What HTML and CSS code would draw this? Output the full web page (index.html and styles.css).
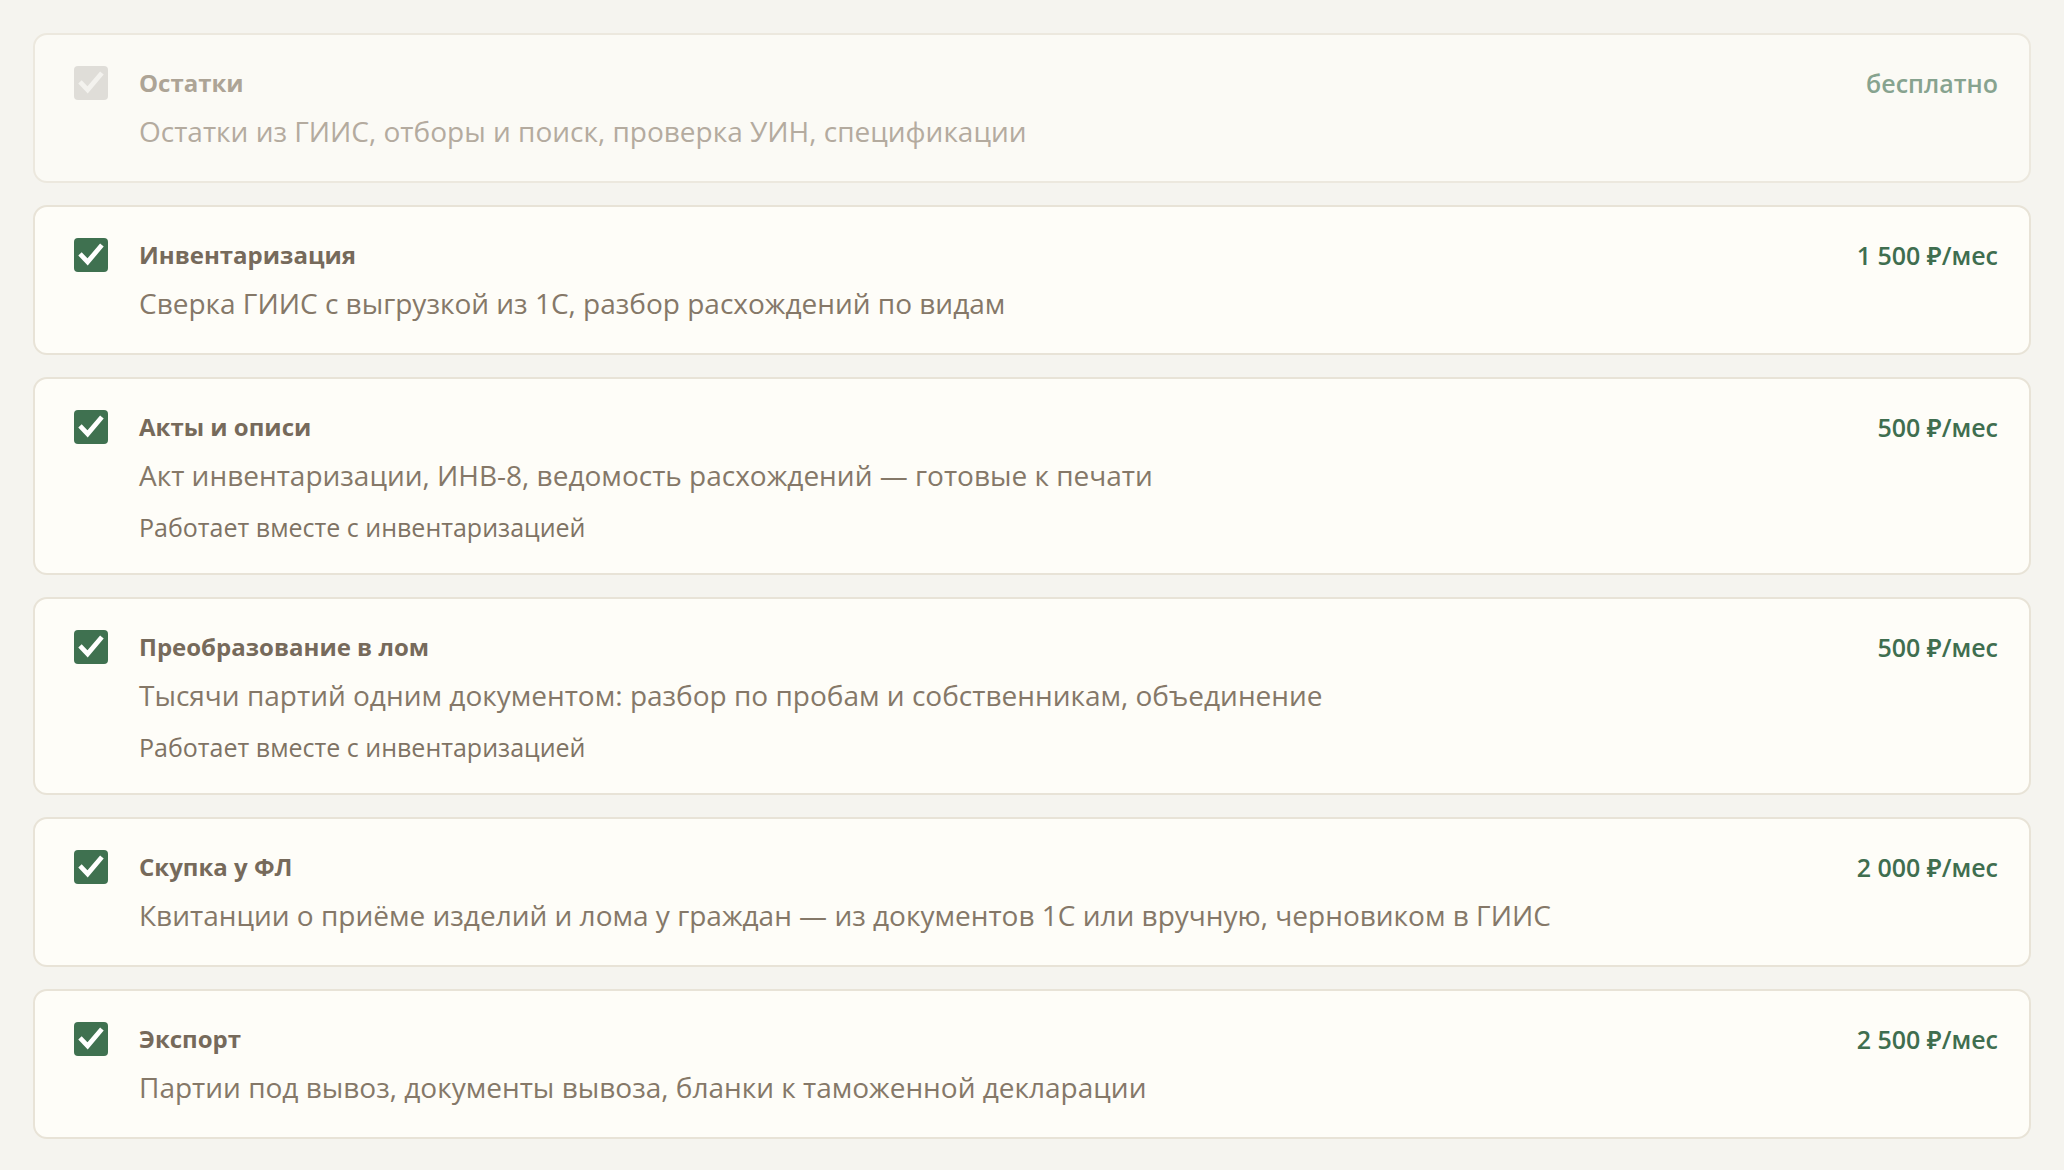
FILE: index.html
```html
<!DOCTYPE html>
<html lang="ru">
<head>
<meta charset="utf-8">
<title>Модули</title>
<link rel="stylesheet" href="styles.css">
</head>
<body>
<div class="list">
  <div class="card card--disabled">
    <span class="check check--off"><svg viewBox="0 0 24 24"><path d="M4.5 12.5l4.8 5L19.5 5.5"/></svg></span>
    <div class="title">Остатки</div>
    <div class="price price--free">бесплатно</div>
    <div class="desc">Остатки из ГИИС, отборы и поиск, проверка УИН, спецификации</div>
  </div>
  <div class="card">
    <span class="check"><svg viewBox="0 0 24 24"><path d="M4.5 12.5l4.8 5L19.5 5.5"/></svg></span>
    <div class="title">Инвентаризация</div>
    <div class="price">1 500 ₽/мес</div>
    <div class="desc">Сверка ГИИС с выгрузкой из 1С, разбор расхождений по видам</div>
  </div>
  <div class="card">
    <span class="check"><svg viewBox="0 0 24 24"><path d="M4.5 12.5l4.8 5L19.5 5.5"/></svg></span>
    <div class="title">Акты и описи</div>
    <div class="price">500 ₽/мес</div>
    <div class="desc">Акт инвентаризации, ИНВ-8, ведомость расхождений — готовые к печати</div>
    <div class="note">Работает вместе с инвентаризацией</div>
  </div>
  <div class="card">
    <span class="check"><svg viewBox="0 0 24 24"><path d="M4.5 12.5l4.8 5L19.5 5.5"/></svg></span>
    <div class="title">Преобразование в лом</div>
    <div class="price">500 ₽/мес</div>
    <div class="desc">Тысячи партий одним документом: разбор по пробам и собственникам, объединение</div>
    <div class="note">Работает вместе с инвентаризацией</div>
  </div>
  <div class="card">
    <span class="check"><svg viewBox="0 0 24 24"><path d="M4.5 12.5l4.8 5L19.5 5.5"/></svg></span>
    <div class="title">Скупка у ФЛ</div>
    <div class="price">2 000 ₽/мес</div>
    <div class="desc">Квитанции о приёме изделий и лома у граждан — из документов 1С или вручную, черновиком в ГИИС</div>
  </div>
  <div class="card">
    <span class="check"><svg viewBox="0 0 24 24"><path d="M4.5 12.5l4.8 5L19.5 5.5"/></svg></span>
    <div class="title">Экспорт</div>
    <div class="price">2 500 ₽/мес</div>
    <div class="desc">Партии под вывоз, документы вывоза, бланки к таможенной декларации</div>
  </div>
</div>
</body>
</html>
```
FILE: styles.css
```css
html, body {
  margin: 0;
  padding: 0;
  background: #f5f4ef;
}
body {
  font-family: "Open Sans", "Noto Sans", sans-serif;
  color: #7d7061;
}
.list {
  display: flex;
  flex-direction: column;
  gap: 22px;
  padding: 33px 33px 31px 33px;
}
.card {
  display: grid;
  grid-template-columns: 34px 1fr auto;
  column-gap: 31px;
  align-items: center;
  background: #fefdf8;
  border: 2px solid #e8e3d7;
  border-radius: 14px;
  padding: 31px 31px 30px 39px;
}
.card--disabled {
  background: #fbfaf5;
  border-color: #ece8de;
}
.check {
  grid-column: 1;
  grid-row: 1;
  width: 34px;
  height: 34px;
  border-radius: 4px;
  background: #3f7150;
  display: flex;
  align-items: center;
  justify-content: center;
}
.check svg {
  width: 30px;
  height: 30px;
  fill: none;
  stroke: #ffffff;
  stroke-width: 3.8;
  stroke-linecap: square;
  stroke-linejoin: miter;
}
.check--off {
  background: #dfddd8;
}
.check--off svg {
  stroke: #f3f2ee;
}
.title {
  grid-column: 2;
  grid-row: 1;
  font-size: 24px;
  font-weight: 700;
  line-height: 34px;
  color: #766a5b;
}
.card--disabled .title {
  color: #ada496;
}
.price {
  grid-column: 3;
  grid-row: 1;
  font-size: 25px;
  font-weight: 600;
  line-height: 34px;
  color: #3f6e4f;
  white-space: nowrap;
}
.price--free {
  color: #87a38f;
}
.desc {
  grid-column: 2 / 4;
  margin-top: 11px;
  font-size: 28px;
  line-height: 40px;
  color: #857868;
}
.card--disabled .desc {
  color: #b4ab9f;
}
.note {
  grid-column: 2 / 4;
  margin-top: 16px;
  font-size: 25px;
  line-height: 32px;
  color: #7f7364;
}
```
